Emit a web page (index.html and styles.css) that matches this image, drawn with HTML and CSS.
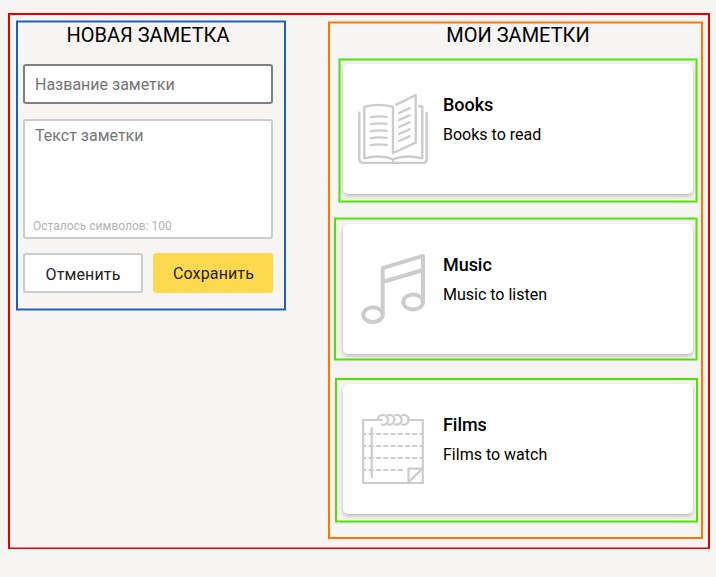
FILE: index.html
```html
<!DOCTYPE html>
<html lang="ru">
<head>
<meta charset="utf-8">
<title>Заметки</title>
<link rel="stylesheet" href="styles.css">
</head>
<body>
<main class="app">
  <section class="editor">
    <h2 class="heading">НОВАЯ ЗАМЕТКА</h2>
    <form class="form">
      <input class="field title-field" type="text" placeholder="Название заметки">
      <div class="field text-field">
        <span class="placeholder">Текст заметки</span>
        <span class="counter">Осталось символов: 100</span>
      </div>
      <div class="actions">
        <button class="btn cancel" type="button">Отменить</button>
        <button class="btn save" type="button">Сохранить</button>
      </div>
    </form>
  </section>
  <section class="notes">
    <h2 class="heading">МОИ ЗАМЕТКИ</h2>
    <div class="slot slot-books">
      <article class="card">
        <svg class="icon" viewBox="0 0 70 70">
          <path d="M1.3 18.7V65Q1.3 69 5.3 69H64.7Q68.7 69 68.7 65V18.7"/>
          <path d="M35 59V12.8Q20 9 6.3 12.8V64.3Q23 60.3 35 65.2Q47 60.3 64.3 64.3V12.8L61.2 12.2M35 65.2V69"/>
          <path d="M38.3 10.6L57.7 1.2V48.7L35 59"/>
          <path d="M12.8 23.1Q21 21.7 28.6 22.9M12.8 30.1Q21 28.7 28.6 29.9M12.8 37.1Q21 35.7 28.6 36.9M12.8 44.1Q21 42.7 28.6 43.9M12.8 51.1Q21 49.7 28.6 50.9"/>
          <path d="M41 19L51.5 14.3M41 26L51.5 21.3M41 33L51.5 28.3M41 40L51.5 35.3M41 47L51.5 42.3"/>
        </svg>
        <div class="info"><h3 class="name">Books</h3><p class="desc">Books to read</p></div>
      </article>
    </div>
    <div class="slot slot-music">
      <article class="card">
        <svg class="icon music" viewBox="0 0 70 70">
          <ellipse cx="15" cy="60.7" rx="9.7" ry="7.4"/>
          <ellipse cx="55.1" cy="48" rx="9.8" ry="7.4"/>
          <path d="M24.7 60.7V14.2L65 1.9V48M24.7 28L65 16"/>
        </svg>
        <div class="info"><h3 class="name">Music</h3><p class="desc">Music to listen</p></div>
      </article>
    </div>
    <div class="slot slot-films">
      <article class="card">
        <svg class="icon films" viewBox="0 0 70 70">
          <path d="M23.7 6H5.2V69H64.8V6H50"/>
          <path d="M19.7 5.8A5.2 4.9 0 1 1 24 10.7M30.2 1.1A5 4.9 0 1 1 30.2 10.5M37.3 1.1A5 4.9 0 1 1 37.3 10.5M44.4 1.1A5 4.9 0 1 1 44.4 10.5"/>
          <path d="M13.7 14.2V63.2"/>
          <path d="M6 20H7.3M11.7 20H15M18.9 20H22.2M26.1 20H29.4M33.4 20H36.7M40.6 20H43.9M47.9 20H51.2M55.1 20H58.4M62.4 20H64"/>
          <path d="M6 32H7.3M11.7 32H15M18.9 32H22.2M26.1 32H29.4M33.4 32H36.7M40.6 32H43.9M47.9 32H51.2M55.1 32H58.4M62.4 32H64"/>
          <path d="M6 44H7.3M11.7 44H15M18.9 44H22.2M26.1 44H29.4M33.4 44H36.7M40.6 44H43.9M47.9 44H51.2M55.1 44H58.4M62.4 44H64"/>
          <path d="M6 56H7.3M11.7 56H15M18.9 56H22.2M26.1 56H29.4M33.4 56H36.7M40.6 56H43.9"/>
          <path d="M50.5 68V54.7H64M51 67.7L64 55"/>
        </svg>
        <div class="info"><h3 class="name">Films</h3><p class="desc">Films to watch</p></div>
      </article>
    </div>
  </section>
</main>
</body>
</html>
```
FILE: styles.css
```css
* { box-sizing: border-box; }

body {
  margin: 0;
  padding: 13px 6px 0 8px;
  background: #f6f5f3;
  color: #000;
  font-family: Roboto, sans-serif;
}

h2, h3, p { margin: 0; font-weight: 400; }

.app {
  display: flex;
  align-items: flex-start;
  justify-content: space-between;
  width: 702px;
  height: 536px;
  padding: 6px 5px 0 6px;
  border: 2px solid #e60000;
  border-bottom-width: 1px;
  box-shadow: 0 1px #ee7b7a, inset 0 -1px #ee7b7a;
}

.heading {
  font-size: 20px;
  line-height: 24px;
  text-align: center;
}

.editor {
  width: 270px;
  height: 289px;
  padding: 1px 11px 0 5px;
  border: solid #1c5fc0;
  border-width: 1px 2px;
  box-shadow: 0 -1px #8badda, 0 1px #8badda, inset 0 1px #8badda, inset 0 -1px #8badda;
}

.form { margin-top: 17px; }

.field {
  display: block;
  width: 250px;
  border: 2px solid #ccc;
  border-radius: 3px;
  background: #fff;
  font: 16px/20px Roboto, sans-serif;
}
.title-field {
  height: 40px;
  padding: 0 10px;
  border-color: #808080;
}
.title-field::placeholder { color: #757575; opacity: 1; }

.text-field {
  display: flex;
  flex-direction: column;
  justify-content: space-between;
  height: 120px;
  margin-top: 15px;
  padding: 5px 8px 3px;
}
.placeholder { padding-left: 2px; color: #757575; }
.counter { font-size: 12px; line-height: 16px; color: #b3b3b3; }

.actions { display: flex; gap: 10px; margin-top: 14px; }
.btn {
  width: 120px;
  height: 40px;
  padding: 2px 0 0;
  border: 2px solid #ccc;
  border-radius: 3px;
  background: #fff;
  color: #222;
  font: 16px/20px Roboto, sans-serif;
  letter-spacing: .13px;
}
.cancel { padding-top: 4px; }
.save { padding-left: 1px; border-color: #ffd94d; background: #ffd94d; }

.notes {
  width: 375px;
  height: 517px;
  margin-top: 1px;
  border: 2px solid #ff7700;
  border-top-width: 1px;
  box-shadow: 0 -1px #fbb67a, inset 0 1px #fbb67a;
}
.notes .heading { padding-left: 5px; }

/* Each slot frames one note; 1px sides are feathered with shadows. */
.slot {
  --edge: #4be600;
  --feather: #a0ee7b;
  border: 1px solid var(--edge);
}
.slot-books {
  width: 358px;
  height: 143px;
  margin: 12px 0 0 9px;
  padding: 4px 0 0 3px;
  box-shadow: 0 0 0 1px var(--feather), inset 0 0 0 1px var(--feather);
}
.slot-music {
  width: 363px;
  height: 142px;
  margin: 16px 0 0 4px;
  padding: 5px 0 0 7px;
  border-left-width: 2px;
  box-shadow: 0 -1px var(--feather), 0 1px var(--feather), 1px 0 var(--feather),
    inset 0 1px var(--feather), inset 0 -1px var(--feather), inset -1px 0 var(--feather);
}
.slot-films {
  width: 363px;
  height: 144px;
  margin: 18px 0 0 5px;
  padding: 4px 0 0 6px;
  border-width: 2px 2px 1px;
  box-shadow: 0 1px var(--feather), inset 0 -1px var(--feather);
}

.card {
  display: flex;
  width: 350px;
  height: 130px;
  padding: 30px 15px;
  border-radius: 5px;
  background: #fff;
  box-shadow: 0 2px 4px rgba(0, 0, 0, .25);
}

.icon {
  flex: none;
  width: 70px;
  height: 70px;
  fill: none;
  stroke: #ccc;
  stroke-width: 2.4;
  stroke-linecap: round;
  stroke-linejoin: round;
}
.icon.music { stroke-width: 4; }
.icon.films { stroke-width: 2.2; stroke-linejoin: miter; }

.info { margin-left: 15px; }
.name { font-size: 18px; font-weight: 500; line-height: 22px; letter-spacing: -.05px; }
.desc { margin-top: 9px; font-size: 16px; line-height: 20px; }
```
